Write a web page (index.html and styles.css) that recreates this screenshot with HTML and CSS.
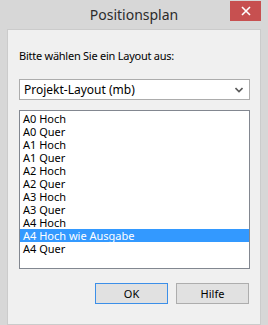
FILE: index.html
```html
<!DOCTYPE html>
<html lang="de">
<head>
    <meta charset="UTF-8">
    <meta name="viewport" content="width=device-width, initial-scale=1.0">
    <title>Positionsplan</title>
    <link rel="stylesheet" href="styles.css">
</head>
<body>
    <div class="window">
        <div class="titlebar">
            <span></span>
            <div class="title">Positionsplan</div>
            <div class="close">
                <svg width="10" height="10" viewBox="0 0 10 10">
                    <path d="M1 1 L9 9 M9 1 L1 9" stroke="#fff" stroke-width="1.6"/>
                </svg>
            </div>
        </div>

        <div class="client">
            <div class="label">Bitte wählen Sie ein Layout aus:</div>

            <div class="dropdown">
                <span>Projekt-Layout (mb)</span>
                <svg width="8" height="6" viewBox="0 0 8 6">
                    <path d="M0.5 1 L4 4.5 L7.5 1" fill="none" stroke="#5a5a5a" stroke-width="1.6"/>
                </svg>
            </div>

            <ul class="listbox">
                <li>A0 Hoch</li>
                <li>A0 Quer</li>
                <li>A1 Hoch</li>
                <li>A1 Quer</li>
                <li>A2 Hoch</li>
                <li>A2 Quer</li>
                <li>A3 Hoch</li>
                <li>A3 Quer</li>
                <li>A4 Hoch</li>
                <li class="selected">A4 Hoch wie Ausgabe</li>
                <li>A4 Quer</li>
            </ul>

            <div class="buttons">
                <div class="btn default">OK</div>
                <div class="btn">Hilfe</div>
            </div>
        </div>
    </div>
</body>
</html>
```

FILE: styles.css
```css
body {
    margin: 0;
    font-family: "Noto Sans", "Open Sans", sans-serif;
    font-size: 11px;
    color: #000;
}

.window {
    width: 268px;
    height: 325px;
    box-sizing: border-box;
    background: #d7d7d7;
    display: flex;
    flex-direction: column;
}

.titlebar {
    height: 29px;
    display: grid;
    grid-template-columns: 1fr auto 1fr;
    align-items: start;
}

.title {
    font-size: 14px;
    line-height: 30px;
    color: #2b2b2b;
}

.close {
    justify-self: end;
    width: 31px;
    height: 20px;
    margin-top: 1px;
    margin-right: 7px;
    background: #c75050;
    display: flex;
    align-items: center;
    justify-content: center;
}

.client {
    margin: 0 7px;
    height: 287px;
    border: 1px solid #cbcbcb;
    background: #f0f0f0;
    padding: 18px 10px 0 11px;
}

.label {
    line-height: 15px;
    letter-spacing: -0.25px;
}

.dropdown {
    margin-top: 16px;
    height: 21px;
    box-sizing: border-box;
    border: 1px solid #acacac;
    background: #fff;
    display: flex;
    align-items: center;
    justify-content: space-between;
    padding: 0 6px 0 4px;
    font-size: 12px;
}

.listbox {
    list-style: none;
    margin: 10px 0 0;
    height: 159px;
    box-sizing: border-box;
    border: 1px solid #828790;
    background: #fff;
    padding: 1px 0 0;
}

.listbox li {
    height: 13px;
    line-height: 13px;
    padding-left: 3px;
}

.listbox li.selected {
    background: #3399ff;
    color: #fff;
}

.buttons {
    margin-top: 14px;
    display: flex;
    justify-content: flex-end;
    gap: 8px;
    padding-right: 1px;
}

.btn {
    width: 73px;
    height: 21px;
    box-sizing: border-box;
    border: 1px solid #adadad;
    background: #e1e1e1;
    text-align: center;
    line-height: 19px;
}

.btn.default {
    border-color: #3c8fe8;
}
```
